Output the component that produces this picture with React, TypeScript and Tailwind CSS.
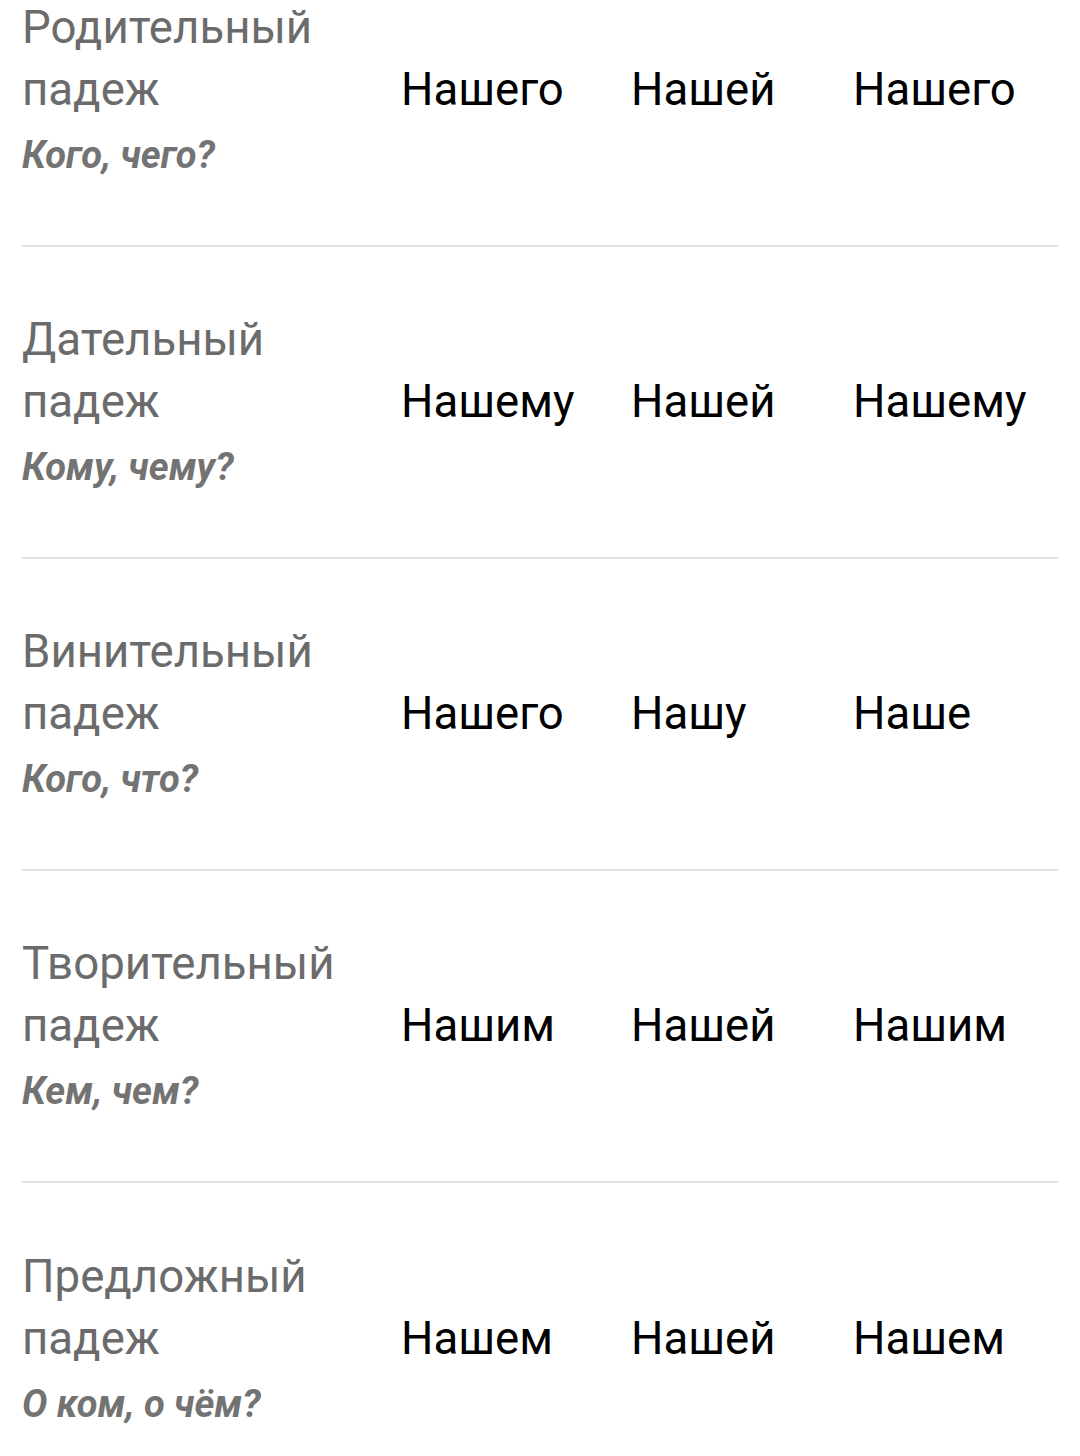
const ROWS = [
  { name: 'Родительный', q: 'Кого, чего?', forms: ['Нашего', 'Нашей', 'Нашего'] },
  { name: 'Дательный', q: 'Кому, чему?', forms: ['Нашему', 'Нашей', 'Нашему'] },
  { name: 'Винительный', q: 'Кого, что?', forms: ['Нашего', 'Нашу', 'Наше'] },
  { name: 'Творительный', q: 'Кем, чем?', forms: ['Нашим', 'Нашей', 'Нашим'] },
  { name: 'Предложный', q: 'О ком, о чём?', forms: ['Нашем', 'Нашей', 'Нашем'] },
]

export default function App() {
  return (
    <div className="h-[1456px] overflow-hidden bg-white font-['Roboto',sans-serif]">
      <div className="-mt-[65px] px-[22px]">
        {ROWS.map((row, i) => (
          <div
            key={row.name}
            className={`h-[312px] grid grid-cols-[379px_230px_222px_1fr] items-center ${
              i < ROWS.length - 1 ? 'border-b-2 border-[#e2e2e2]' : ''
            }`}
          >
            {/* pt shifts the centered label block a touch lower */}
            <div className="flex flex-col pt-[5px]">
              <span className="text-[45.6px] leading-[62px] text-[#6b6b6b]">{row.name}</span>
              <span className="text-[45.6px] leading-[62px] text-[#6b6b6b]">падеж</span>
              <span className="text-[38px] leading-[68px] font-bold italic text-[#737373]">{row.q}</span>
            </div>
            {row.forms.map((f, j) => (
              <span key={j} className="text-[45.5px] leading-[58px] text-black">
                {f}
              </span>
            ))}
          </div>
        ))}
      </div>
    </div>
  )
}
